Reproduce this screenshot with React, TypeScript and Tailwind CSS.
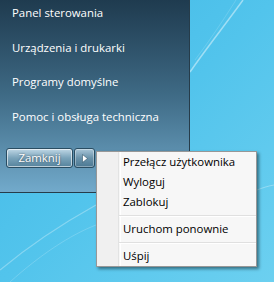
import React from "react";

const links = [
  "Panel sterowania",
  "Urządzenia i drukarki",
  "Programy domyślne",
  "Pomoc i obsługa techniczna",
];

function Sep() {
  return (
    <div className="h-[7px] pl-[22px] pt-[3px]">
      <div className="h-[1px] bg-[#e0e0e0] border-b border-white box-content" />
    </div>
  );
}

function Item({ label }: { label: string }) {
  return (
    <div className="h-[20px] flex items-center pl-[26px] text-black">{label}</div>
  );
}

export default function App() {
  return (
    <div
      className="relative w-[274px] h-[282px] overflow-hidden bg-gradient-to-br from-[#3fb8e6] via-[#52c4ec] to-[#6cd0f0] text-[11.4px]"
      style={{ fontFamily: '"Open Sans", "Noto Sans", sans-serif' }}
    >
      <svg className="absolute inset-0" width="274" height="282">
        <path d="M190 72 C205 50 225 25 243 0" stroke="rgba(255,255,255,0.45)" strokeWidth="1.5" fill="none" />
        <path d="M195 60 C210 40 222 22 236 0" stroke="rgba(255,255,255,0.15)" strokeWidth="1" fill="none" />
        <path d="M0 270 C30 245 60 225 96 205" stroke="rgba(255,255,255,0.3)" strokeWidth="1.2" fill="none" />
        <path d="M10 282 C40 255 70 235 96 225" stroke="rgba(255,255,255,0.18)" strokeWidth="1" fill="none" />
        <path d="M257 190 C262 188 268 186 274 185" stroke="rgba(255,255,255,0.3)" strokeWidth="1" fill="none" />
      </svg>

      <div className="relative w-[190px] h-[193px] flex flex-col bg-gradient-to-b from-[#1f3b4f] via-[#3f6b86] to-[#72aacb] border-r border-b border-[#263c4a]">
        <div className="flex flex-col gap-[8.5px] pl-[12px] text-white">
          {links.map((l) => (
            <div key={l} className="h-[26px] flex items-center whitespace-nowrap">
              {l}
            </div>
          ))}
        </div>

        <div className="mt-[18.5px] ml-[6px] flex gap-[1px]">
          <div className="w-[67px] h-[20px] rounded-[3px] border border-[#2a4d62] bg-gradient-to-b from-[#c0d8e6] via-[#7aa3ba] to-[#55839c] shadow-[inset_0_0_0_1px_rgba(255,255,255,0.6)] flex items-center justify-center text-white [text-shadow:0_0_2px_rgba(0,0,0,0.6)]">
            Zamknij
          </div>
          <div className="w-[21px] h-[20px] rounded-[3px] border border-[#2a4d62] bg-gradient-to-b from-[#a9c6d8] via-[#6a93ab] to-[#4b7892] shadow-[inset_0_0_0_1px_rgba(255,255,255,0.35)] flex items-center justify-center">
            <svg width="6" height="9" viewBox="0 0 6 9">
              <path d="M0.5 0.5 L5.5 4.5 L0.5 8.5 Z" fill="white" stroke="#33576b" strokeWidth="0.6" />
            </svg>
          </div>
        </div>
      </div>

      <div className="absolute left-[96px] top-[151px] w-[161px] h-[116px] border border-[#979797] bg-[#f7f7f7] shadow-[2px_2px_3px_rgba(0,0,0,0.45)] flex flex-col">
        <div className="absolute left-0 top-0 bottom-0 w-[22px] bg-[#f0f0f0] border-r border-[#e2e3e3]" />
        <div className="absolute left-[23px] top-0 bottom-0 w-[1px] bg-white" />
        <div className="relative flex flex-col">
          <Item label="Przełącz użytkownika" />
          <Item label="Wyloguj" />
          <Item label="Zablokuj" />
          <Sep />
          <Item label="Uruchom ponownie" />
          <Sep />
          <Item label="Uśpij" />
        </div>
      </div>
    </div>
  );
}
